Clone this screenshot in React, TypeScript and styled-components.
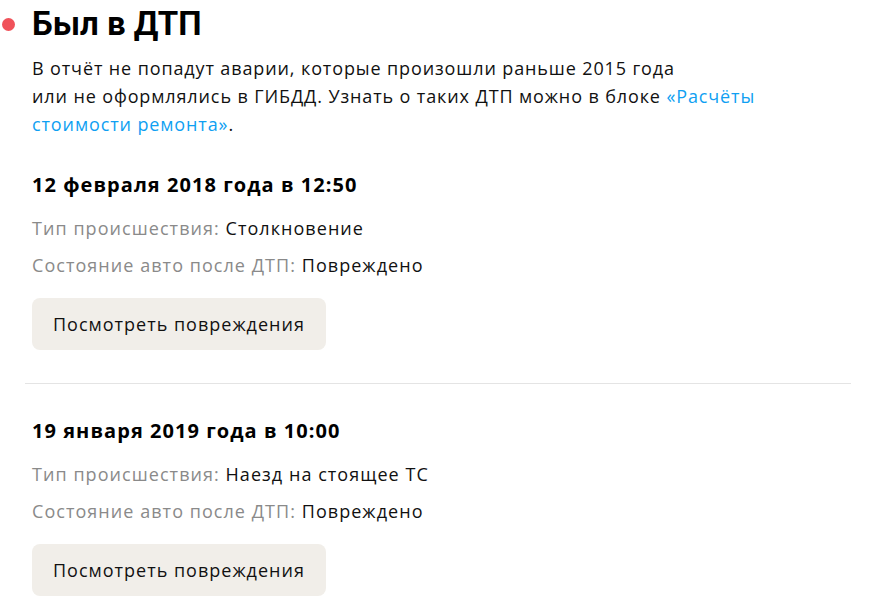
import React from "react";
import styled, { createGlobalStyle } from "styled-components";

const GlobalStyle = createGlobalStyle`
  html, body { margin: 0; padding: 0; background: #ffffff; }
  body {
    font-family: "Open Sans", "Noto Sans", sans-serif;
    color: #111111;
  }
`;

const Page = styled.div`
  width: 872px;
  height: 596px;
  overflow: hidden;
  box-sizing: border-box;
  padding: 4px 21px 0 2px;
`;

const Header = styled.div`
  display: flex;
  align-items: center;
  gap: 17px;
`;

const Dot = styled.span`
  width: 13px;
  height: 13px;
  border-radius: 50%;
  background: #f0525a;
  flex: none;
`;

const Title = styled.h1`
  margin: 0;
  font-family: Roboto, "Liberation Sans", sans-serif;
  font-weight: 700;
  font-size: 33px;
  line-height: 40px;
  color: #000;
`;

const Content = styled.div`
  padding-left: 30px;
`;

const Lead = styled.p`
  margin: 10px 0 0;
  max-width: 800px;
  font-size: 18px;
  line-height: 28px;
  letter-spacing: 0.88px;
  color: #111;
`;

const Link = styled.a`
  color: #0f9ff2;
  text-decoration: none;
`;

const Accident = styled.section`
  padding-top: 33px;
`;

const DateTitle = styled.h2`
  margin: 0;
  font-weight: 700;
  font-size: 20px;
  line-height: 28px;
  letter-spacing: 1.05px;
  color: #000;
`;

const Rows = styled.div`
  display: flex;
  flex-direction: column;
  gap: 9px;
  margin-top: 15px;
`;

const Row = styled.div`
  font-size: 18px;
  line-height: 28px;
  letter-spacing: 1.05px;
  color: #111;
`;

const Label = styled.span`
  color: #8a8a8a;
`;

const Button = styled.button`
  margin-top: 19px;
  height: 52px;
  padding: 0 21px;
  border: none;
  border-radius: 8px;
  background: #f1eee9;
  font-family: "Open Sans", "Noto Sans", sans-serif;
  font-size: 18px;
  letter-spacing: 1px;
  color: #111;
  cursor: pointer;
`;

const Divider = styled.hr`
  margin: 33px 0 0 23px;
  border: none;
  height: 1px;
  background: #e4e4e4;
`;

type Item = { date: string; type: string; state: string };

const items: Item[] = [
  { date: "12 февраля 2018 года в 12:50", type: "Столкновение", state: "Повреждено" },
  { date: "19 января 2019 года в 10:00", type: "Наезд на стоящее ТС", state: "Повреждено" },
];

export default function App() {
  return (
    <>
      <GlobalStyle />
      <Page>
        <Header>
          <Dot />
          <Title>Был в ДТП</Title>
        </Header>
        <Content>
          <Lead>
            В отчёт не попадут аварии, которые произошли раньше 2015 года
            <br />
            или не оформлялись в ГИБДД. Узнать о таких ДТП можно в блоке{" "}
            <Link href="#">«Расчёты стоимости ремонта»</Link>.
          </Lead>
        </Content>
        {items.map((it, i) => (
          <React.Fragment key={it.date}>
            {i > 0 && <Divider />}
            <Content>
              <Accident>
                <DateTitle>{it.date}</DateTitle>
                <Rows>
                  <Row>
                    <Label>Тип происшествия:</Label> {it.type}
                  </Row>
                  <Row>
                    <Label>Состояние авто после ДТП:</Label> {it.state}
                  </Row>
                </Rows>
                <Button>Посмотреть повреждения</Button>
              </Accident>
            </Content>
          </React.Fragment>
        ))}
      </Page>
    </>
  );
}
